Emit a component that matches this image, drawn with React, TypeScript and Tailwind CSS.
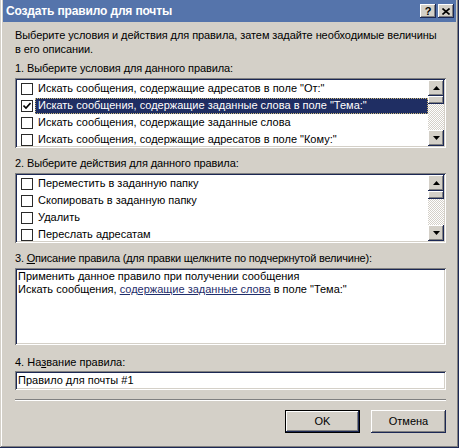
import React from "react";

const bevel =
  "bg-[#d4d0c8] shadow-[inset_-1px_-1px_#1c2854,inset_1px_1px_#fff,inset_-2px_-2px_#808080]";
const sunken =
  "bg-white shadow-[inset_1px_1px_#808080,inset_-1px_-1px_#fff,inset_2px_2px_#1c2854,inset_-2px_-2px_#d4d0c8]";

function Arrow({ up }: { up?: boolean }) {
  return (
    <svg width="7" height="4" viewBox="0 0 7 4">
      {up ? (
        <polygon points="3.5,0 7,4 0,4" fill="#000" />
      ) : (
        <polygon points="0,0 7,0 3.5,4" fill="#000" />
      )}
    </svg>
  );
}

function ScrollBar() {
  return (
    <div className="w-[16px] flex flex-col shrink-0">
      <div className={`h-[16px] flex items-center justify-center ${bevel}`}>
        <Arrow up />
      </div>
      <div className={`h-[8px] ${bevel}`} />
      <div className="flex-1 bg-[repeating-conic-gradient(#d4d0c8_0_25%,#fff_0_50%)] bg-[length:2px_2px]" />
      <div className={`h-[16px] flex items-center justify-center ${bevel}`}>
        <Arrow />
      </div>
    </div>
  );
}

function Check({ checked }: { checked?: boolean }) {
  return (
    <span className="w-[12px] h-[12px] bg-white border border-[#2a2a2a] shrink-0 flex items-center justify-center">
      {checked && (
        <svg width="8" height="8" viewBox="0 0 8 8">
          <polyline points="0.5,3.5 3,6 7.5,1" fill="none" stroke="#000" strokeWidth="1.6" />
        </svg>
      )}
    </span>
  );
}

function CheckList({ items, selected }: { items: string[]; selected?: number }) {
  return (
    <div className={`h-[70px] p-[2px] flex ${sunken}`}>
      <div className="flex-1 overflow-hidden">
        {items.map((t, i) => (
          <div key={i} className="h-[17px] flex items-center pl-[4px]">
            <Check checked={i === selected} />
            <span
              className={`ml-[2px] flex-1 h-[16px] flex items-center pl-[2px] whitespace-nowrap ${
                i === selected
                  ? "bg-[#1f2e63] text-white border border-dotted border-[#c9b77a]"
                  : "border border-transparent"
              }`}
            >
              {t}
            </span>
          </div>
        ))}
      </div>
      <ScrollBar />
    </div>
  );
}

export default function App() {
  return (
    <div className="w-[459px] h-[448px] bg-[#d4d0c8] text-[11px] text-black font-['Liberation_Sans',Arial,sans-serif] flex flex-col px-[3px] shadow-[inset_-1px_-1px_#1c2854,inset_1px_0_#d4d0c8,inset_-2px_-2px_#808080,inset_2px_0_#fff]">
      <div className="h-[22px] bg-[#5574ab] flex items-center justify-between pl-[3px] pr-[2px]">
        <span className="text-white font-bold text-[12px] tracking-[-0.15px]">Создать правило для почты</span>
        <div className="flex gap-[2px]">
          <div className={`w-[16px] h-[14px] flex items-center justify-center font-bold text-[11px] leading-none ${bevel}`}>
            ?
          </div>
          <div className={`w-[16px] h-[14px] flex items-center justify-center ${bevel}`}>
            <svg width="8" height="7" viewBox="0 0 8 7">
              <path d="M0.5 0.5 L7.5 6.5 M7.5 0.5 L0.5 6.5" stroke="#000" strokeWidth="1.6" />
            </svg>
          </div>
        </div>
      </div>

      <div className="ml-[12px] w-[431px] flex flex-col">
        <p className="mt-[6px] leading-[14px] tracking-[-0.08px]">
          Выберите условия и действия для правила, затем задайте необходимые величины
          <br />в его описании.
        </p>

        <div className="mt-[6px] leading-[13px] tracking-[-0.1px]">1. Выберите условия для данного правила:</div>
        <div className="mt-[3px]">
          <CheckList
            selected={1}
            items={[
              'Искать сообщения, содержащие адресатов в поле "От:"',
              'Искать сообщения, содержащие заданные слова в поле "Тема:"',
              "Искать сообщения, содержащие заданные слова",
              'Искать сообщения, содержащие адресатов в поле "Кому:"',
            ]}
          />
        </div>

        <div className="mt-[9px] leading-[13px] tracking-[-0.1px]">2. Выберите действия для данного правила:</div>
        <div className="mt-[3px]">
          <CheckList
            items={[
              "Переместить в заданную папку",
              "Скопировать в заданную папку",
              "Удалить",
              "Переслать адресатам",
            ]}
          />
        </div>

        <div className="mt-[9px] leading-[13px] tracking-[-0.2px]">
          3. <span className="underline">О</span>писание правила (для правки щелкните по подчеркнутой величине):
        </div>
        <div className={`mt-[3px] h-[77px] p-[2px] pl-[3px] leading-[13px] ${sunken}`}>
          <div>Применить данное правило при получении сообщения</div>
          <div>
            Искать сообщения, <span className="text-[#1f2e6b] underline">содержащие заданные слова</span> в поле
            "Тема:"
          </div>
        </div>

        <div className="mt-[11px] leading-[13px]">
          4. На<span className="underline">з</span>вание правила:
        </div>
        <div className={`mt-[2px] h-[19px] px-[3px] flex items-center ${sunken}`}>Правило для почты #1</div>

        <div className="mt-[9px] h-[2px] border-t border-[#808080] border-b border-b-white" />

        <div className="mt-[9px] flex justify-end gap-[11px]">
          <div className="w-[75px] h-[23px] border border-black">
            <div className={`w-full h-full flex items-center justify-center ${bevel}`}>OK</div>
          </div>
          <div className={`w-[75px] h-[23px] flex items-center justify-center ${bevel}`}>Отмена</div>
        </div>
      </div>
    </div>
  );
}
